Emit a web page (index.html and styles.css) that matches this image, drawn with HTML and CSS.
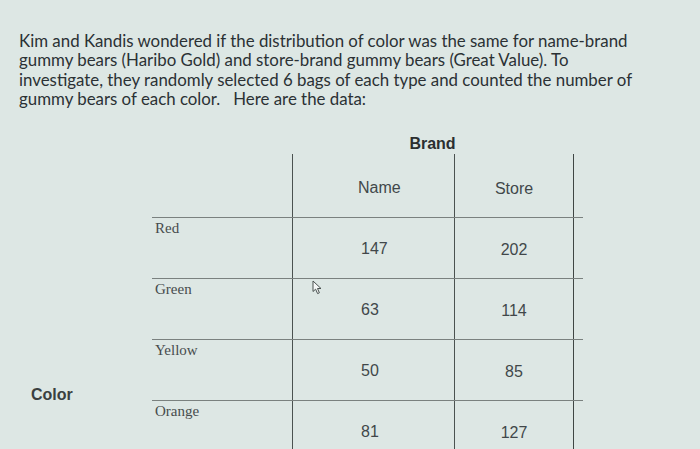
FILE: index.html
```html
<!DOCTYPE html>
<html lang="en">
<head>
<meta charset="utf-8">
<title>Gummy bears</title>
<link rel="stylesheet" href="styles.css">
</head>
<body>
<div class="page">
  <p class="intro">Kim and Kandis wondered if the distribution of color was the same for name-brand<br>gummy bears (Haribo Gold) and store-brand gummy bears (Great Value). To<br>investigate, they randomly selected 6 bags of each type and counted the number of<br>gummy bears of each color.&nbsp;&nbsp; Here are the data:</p>
  <div class="brand-row"><span class="brand">Brand</span></div>
  <div class="data">
    <div class="color-col"><span class="color">Color</span></div>
    <div class="grid">
      <div class="row head">
        <div class="lab"></div>
        <div class="c name">Name</div>
        <div class="c store">Store</div>
        <div class="tail"></div>
      </div>
      <div class="row">
        <div class="lab">Red</div>
        <div class="c num">147</div>
        <div class="c snum">202</div>
        <div class="tail"></div>
      </div>
      <div class="row">
        <div class="lab">Green</div>
        <div class="c num">63</div>
        <div class="c snum">114</div>
        <div class="tail"></div>
      </div>
      <div class="row">
        <div class="lab">Yellow</div>
        <div class="c num">50</div>
        <div class="c snum">85</div>
        <div class="tail"></div>
      </div>
      <div class="row">
        <div class="lab">Orange</div>
        <div class="c num">81</div>
        <div class="c snum">127</div>
        <div class="tail"></div>
      </div>
    </div>
  </div>
  <svg class="cursor" width="12" height="15" viewBox="0 0 12 15"><path d="M1 1 L1 11.5 L3.6 9.2 L5.6 13.6 L7.4 12.8 L5.5 8.5 L9 8.5 Z" fill="#f4f7f6" stroke="#4a5250" stroke-width="1" stroke-linejoin="round"/></svg>
</div>
</body>
</html>
```
FILE: styles.css
```css
html, body {
  margin: 0;
  padding: 0;
}
body {
  width: 700px;
  height: 449px;
  overflow: hidden;
  background: #dde7e4;
}
.page {
  position: relative;
  padding: 31px 0 0 19px;
}
.intro {
  margin: 0;
  white-space: nowrap;
  font-family: Lato, "Noto Sans", sans-serif;
  font-size: 16.85px;
  line-height: 19.4px;
  color: #2b3134;
}
.brand-row {
  display: flex;
  justify-content: center;
  width: 281px;
  margin-left: 273px;
  margin-top: 26px;
  height: 19px;
}
.brand {
  font-family: "Liberation Sans", Arial, sans-serif;
  font-weight: bold;
  font-size: 16px;
  color: #2b2f30;
}
.data {
  display: flex;
  margin-left: -19px;
}
.color-col {
  width: 152px;
  padding-top: 232px;
  padding-left: 31px;
  box-sizing: border-box;
}
.color {
  font-family: "Liberation Sans", Arial, sans-serif;
  font-weight: bold;
  font-size: 16px;
  color: #3a3f40;
}
.grid {
  display: flex;
  flex-direction: column;
}
.row {
  display: grid;
  grid-template-columns: 140px 162px 119px 10px;
  height: 61px;
  box-sizing: border-box;
  border-top: 1px solid #7a817f;
}
.row.head {
  border-top: none;
  height: 63px;
}
.lab {
  font-family: "Liberation Serif", "Times New Roman", serif;
  font-size: 15px;
  color: #474c4d;
  padding: 2px 0 0 3px;
}
.c {
  border-left: 1px solid #4b5250;
  font-family: "Liberation Sans", Arial, sans-serif;
  font-size: 16px;
  color: #41474a;
}
.tail {
  border-left: 1px solid #3f4644;
}
.name {
  padding: 25px 0 0 65px;
}
.store {
  padding-top: 26px;
  text-align: center;
}
.num {
  padding: 22px 0 0 68px;
}
.snum {
  padding-top: 23px;
  text-align: center;
}
.cursor {
  position: absolute;
  left: 312px;
  top: 280px;
}
```
